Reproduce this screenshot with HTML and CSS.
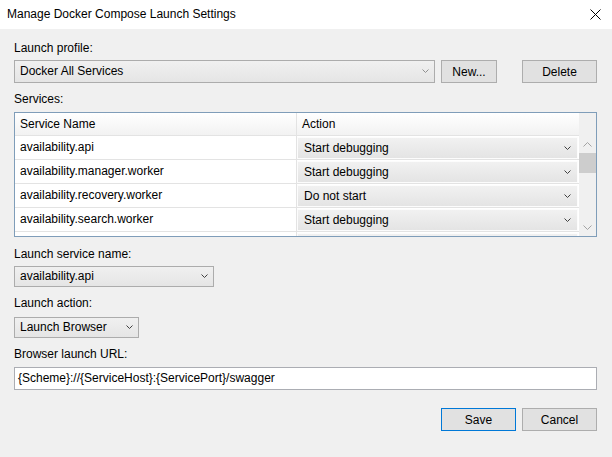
FILE: index.html
```html
<!DOCTYPE html>
<html>
<head>
<meta charset="utf-8">
<link rel="stylesheet" href="styles.css">
</head>
<body>
<div class="dialog">
  <div class="titlebar">
    <span class="title">Manage Docker Compose Launch Settings</span>
    <svg class="close" width="11" height="11" viewBox="0 0 11 11"><path d="M0.5 0.5 L10.5 10.5 M10.5 0.5 L0.5 10.5" stroke="#000" stroke-width="1" fill="none"/></svg>
  </div>
  <div class="content">
    <div class="label l-profile">Launch profile:</div>
    <div class="row-profile">
      <div class="combo combo-profile"><span>Docker All Services</span><svg class="chev light" width="7" height="5" viewBox="0 0 7 5"><path d="M0.5 0.5 L3.5 3.5 L6.5 0.5" fill="none" stroke="currentColor"/></svg></div>
      <button class="btn btn-new">New...</button>
      <button class="btn btn-delete">Delete</button>
    </div>
    <div class="label l-services">Services:</div>
    <div class="grid">
      <div class="grid-main">
        <div class="grow ghead"><div class="cell cname">Service Name</div><div class="cell caction hcell">Action</div></div>
        <div class="grow"><div class="cell cname">availability.api</div><div class="cell caction"><div class="cellcombo"><span>Start debugging</span><svg class="chev" width="7" height="5" viewBox="0 0 7 5"><path d="M0.5 0.5 L3.5 3.5 L6.5 0.5" fill="none" stroke="currentColor"/></svg></div></div></div>
        <div class="grow"><div class="cell cname">availability.manager.worker</div><div class="cell caction"><div class="cellcombo"><span>Start debugging</span><svg class="chev" width="7" height="5" viewBox="0 0 7 5"><path d="M0.5 0.5 L3.5 3.5 L6.5 0.5" fill="none" stroke="currentColor"/></svg></div></div></div>
        <div class="grow"><div class="cell cname">availability.recovery.worker</div><div class="cell caction"><div class="cellcombo"><span>Do not start</span><svg class="chev" width="7" height="5" viewBox="0 0 7 5"><path d="M0.5 0.5 L3.5 3.5 L6.5 0.5" fill="none" stroke="currentColor"/></svg></div></div></div>
        <div class="grow"><div class="cell cname">availability.search.worker</div><div class="cell caction"><div class="cellcombo"><span>Start debugging</span><svg class="chev" width="7" height="5" viewBox="0 0 7 5"><path d="M0.5 0.5 L3.5 3.5 L6.5 0.5" fill="none" stroke="currentColor"/></svg></div></div></div>
        <div class="grow"><div class="cell cname"></div><div class="cell caction"><div class="cellcombo"></div></div></div>
      </div>
      <div class="vscroll">
        <div class="sb-btn"><svg width="9" height="5" viewBox="0 0 9 5"><path d="M0.5 4.5 L4.5 0.5 L8.5 4.5" fill="none" stroke="currentColor"/></svg></div>
        <div class="sb-track"><div class="sb-thumb"></div></div>
        <div class="sb-btn"><svg width="9" height="5" viewBox="0 0 9 5"><path d="M0.5 0.5 L4.5 4.5 L8.5 0.5" fill="none" stroke="currentColor"/></svg></div>
      </div>
    </div>
    <div class="label l-svcname">Launch service name:</div>
    <div class="combo combo-svc"><span>availability.api</span><svg class="chev" width="7" height="5" viewBox="0 0 7 5"><path d="M0.5 0.5 L3.5 3.5 L6.5 0.5" fill="none" stroke="currentColor"/></svg></div>
    <div class="label l-action">Launch action:</div>
    <div class="combo combo-action"><span>Launch Browser</span><svg class="chev" width="7" height="5" viewBox="0 0 7 5"><path d="M0.5 0.5 L3.5 3.5 L6.5 0.5" fill="none" stroke="currentColor"/></svg></div>
    <div class="label l-url">Browser launch URL:</div>
    <div class="textbox">{Scheme}://{ServiceHost}:{ServicePort}/swagger</div>
    <div class="footer">
      <button class="btn btn-save">Save</button>
      <button class="btn btn-cancel">Cancel</button>
    </div>
  </div>
</div>
</body>
</html>
```
FILE: styles.css
```css
* { box-sizing: border-box; }
html, body { margin: 0; padding: 0; }
body {
  font-family: "Liberation Sans", Arial, sans-serif;
  font-size: 12px;
  color: #000;
  background: #f0f0f0;
}
.dialog {
  width: 612px;
  height: 457px;
  background: #f0f0f0;
  display: flex;
  flex-direction: column;
  overflow: hidden;
}
.titlebar {
  height: 29px;
  flex: none;
  background: #fff;
  display: flex;
  align-items: center;
  justify-content: space-between;
  padding: 0 11px 0 7px;
}
.title { line-height: 15px; }
.close { display: block; }
.content {
  display: flex;
  flex-direction: column;
  padding: 0 15px 0 14px;
}
.label { line-height: 15px; height: 15px; }
.l-profile { margin-top: 12px; }
.row-profile { margin-top: 4px; display: flex; height: 23px; }
.l-services { margin-top: 9px; }
.l-svcname { margin-top: 10px; }
.l-action { margin-top: 9px; }
.l-url { margin-top: 9px; }

.combo {
  display: flex;
  align-items: center;
  justify-content: space-between;
  border: 1px solid #acacac;
  background: linear-gradient(#f0f0f0, #e5e5e5);
  padding: 0 5px 0 5px;
  line-height: 15px;
}
.combo-profile { flex: 1; }
.combo-svc { margin-top: 4px; width: 200px; height: 21px; }
.combo-action { margin-top: 6px; width: 125px; height: 21px; }
.chev { display: block; color: #404040; }
.chev.light { color: #909090; }

.btn {
  font: inherit;
  color: #000;
  background: #e1e1e1;
  border: 1px solid #adadad;
  height: 23px;
  padding: 0;
  margin: 0;
}
.btn-new { width: 56px; margin-left: 6px; }
.btn-delete { width: 75px; margin-left: 25px; }

.grid {
  margin-top: 5px;
  height: 125px;
  border: 1px solid #7f9db9;
  display: flex;
  background: #fff;
}
.grid-main { flex: 1; overflow: hidden; }
.grow {
  display: flex;
  height: 24px;
  border-bottom: 1px solid #e3e3e3;
}
.ghead {
  height: 23px;
  background: linear-gradient(#ffffff, #f2f2f2);
  border-bottom: 1px solid #e3e3e3;
}
.cell {
  width: 282px;
  display: flex;
  align-items: center;
  line-height: 15px;
}
.cname { padding-left: 5px; border-right: 1px solid #e3e3e3; }
.caction { padding: 1px 1px 0 0; }
.hcell { padding-left: 5px; }
.cellcombo {
  flex: 1;
  height: 100%;
  display: flex;
  align-items: center;
  justify-content: space-between;
  padding: 0 6px 0 6px;
  background: linear-gradient(#f1f1f1, #e4e4e4);
  border: 1px solid #fcfcfc;
}
.vscroll {
  width: 17px;
  background: #f0f0f0;
  padding-top: 23px;
  display: flex;
  flex-direction: column;
}
.sb-btn {
  height: 17px;
  display: flex;
  align-items: center;
  justify-content: center;
  color: #a3a3a3;
}
.sb-btn svg { display: block; }
.sb-track { flex: 1; }
.sb-thumb { height: 20px; background: #cdcdcd; margin-top: 0; }

.textbox {
  margin-top: 5px;
  height: 23px;
  background: #fff;
  border: 1px solid #abadb3;
  padding-left: 3px;
  line-height: 21px;
}
.footer {
  margin-top: 18px;
  display: flex;
  justify-content: flex-end;
  gap: 6px;
}
.btn-save { width: 75px; border-color: #0078d7; }
.btn-cancel { width: 75px; }
```
